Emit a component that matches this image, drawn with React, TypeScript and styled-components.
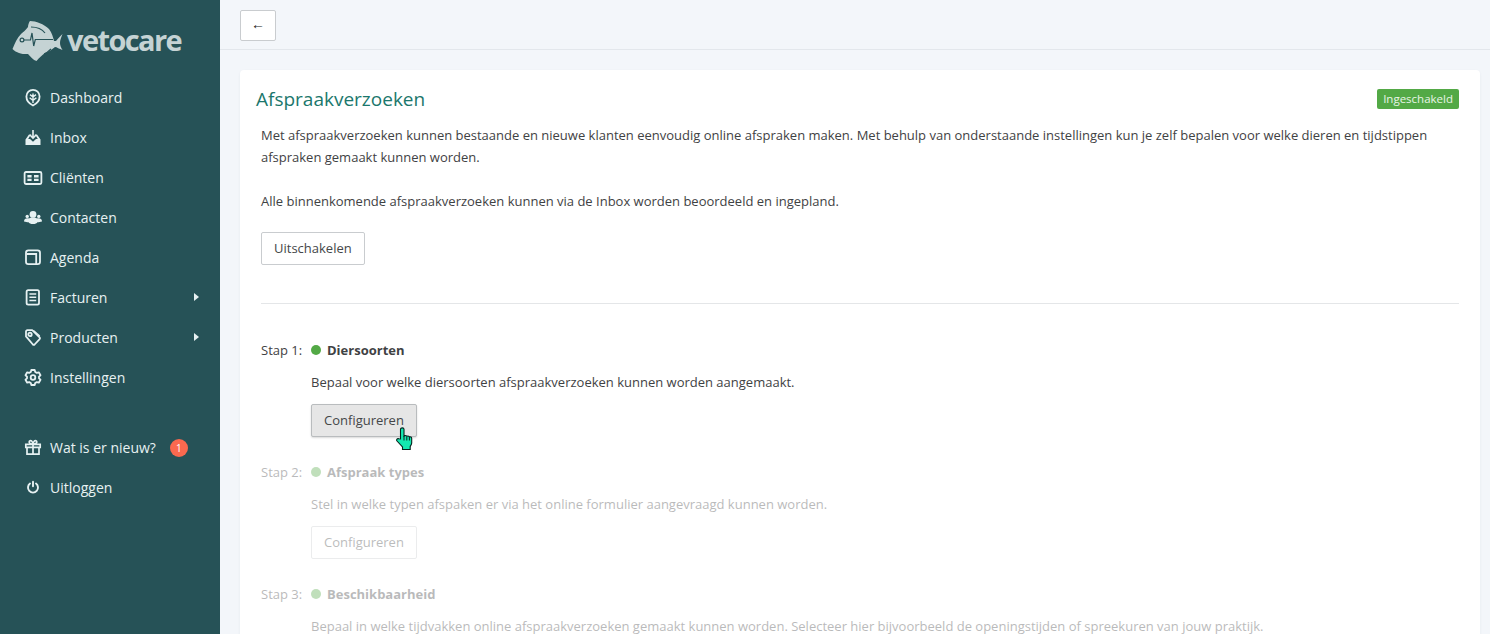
import React from 'react';
import styled, { createGlobalStyle } from 'styled-components';

const GlobalStyle = createGlobalStyle`
  html, body {
    margin: 0;
    padding: 0;
    height: 100%;
    overflow: hidden;
    font-family: "Open Sans", "Liberation Sans", sans-serif;
  }
  * {
    box-sizing: border-box;
  }
`;

const iconProps = {
  width: 20,
  height: 20,
  viewBox: '0 0 20 20',
  fill: 'none',
  stroke: 'currentColor',
  strokeWidth: 1.8,
};

const LeafIcon = () => (
  <svg {...iconProps}>
    <path d="M10 18.5C5.8 16.5 3.4 13.5 3.4 9.5 3.4 5.5 6.5 2.8 10 2.8s6.6 2.7 6.6 6.7c0 4-2.4 7-6.6 9z" />
    <path d="M10 16V6.5M10 10 7 7.6M10 10l3-2.4M10 13.4 6.6 10.8M10 13.4l3.4-2.6" strokeWidth={1.4} />
  </svg>
);

const InboxIcon = () => (
  <svg {...iconProps} stroke="none" fill="currentColor">
    <path d="M2.5 18v-5.5L6 7.5h2.2v1.6H7L5.2 12H7l3 2.8 3-2.8h1.8L13 9.1h-1.2V7.5H14l3.5 5V18z" />
    <path d="M9.2 3h1.6v6.2l1.8-1.8 1 1-3.6 3.8-3.6-3.8 1-1 1.8 1.8z" />
  </svg>
);

const CardIcon = () => (
  <svg {...iconProps}>
    <rect x="1.6" y="5" width="16.8" height="12" rx="1.4" />
    <path
      d="M4.4 8h4.2v2.4H4.4zM4.4 11.8h4.2v2.2H4.4zM11 8h4.6v2.4H11zM11 11.8h4.6v2.2H11z"
      fill="currentColor"
      stroke="none"
    />
  </svg>
);

const PeopleIcon = () => (
  <svg {...iconProps} stroke="none" fill="currentColor">
    <circle cx="10" cy="7.4" r="3.4" />
    <circle cx="4.2" cy="9.4" r="1.7" />
    <circle cx="15.8" cy="9.4" r="1.7" />
    <path d="M1 14.5c0-2 1.5-3.2 3.5-3.2.6 0 1.1.1 1.5.3 1-.7 2.5-1 4-1s3 .3 4 1c.4-.2.9-.3 1.5-.3 2 0 3.5 1.2 3.5 3.2-1.5.6-3.2.7-4.6.7-.4 1.2-2.2 1.8-4.4 1.8s-4-.6-4.4-1.8c-1.4 0-3.1-.1-4.6-.7z" />
  </svg>
);

const AgendaIcon = () => (
  <svg {...iconProps}>
    <rect x="3" y="3.4" width="14" height="13.8" rx="2.4" />
    <path d="M3.4 7h9.8v10" />
  </svg>
);

const InvoiceIcon = () => (
  <svg {...iconProps}>
    <rect x="3.6" y="3.2" width="12.4" height="14.4" rx="1.6" />
    <path d="M6.4 7h6.8M6.4 10.3h6.8M6.4 13.6h6.8" strokeWidth={1.5} />
  </svg>
);

const TagIcon = () => (
  <svg {...iconProps}>
    <path d="M3 9.4V4.6C3 3.8 3.6 3.2 4.4 3.2h4.8l7.4 7.2c.5.5.5 1.2 0 1.7l-5 5.4c-.5.5-1.2.5-1.7 0z" strokeLinejoin="round" />
    <circle cx="7" cy="7.4" r="1.7" />
    <path d="M10.5 3.5 16.8 9" strokeWidth={1.2} />
  </svg>
);

const GearIcon = () => (
  <svg {...iconProps}>
    <path
      d="M8.3 3h3.4l.5 2 1.6.9 2-.6 1.7 3-1.5 1.4v1.6l1.5 1.4-1.7 3-2-.6-1.6.9-.5 2H8.3l-.5-2-1.6-.9-2 .6-1.7-3 1.5-1.4V9.7L2.5 8.3l1.7-3 2 .6 1.6-.9z"
      strokeLinejoin="round"
    />
    <circle cx="10" cy="10.5" r="2.3" />
  </svg>
);

const GiftIcon = () => (
  <svg {...iconProps} strokeWidth={1.7}>
    <path d="M2.8 7.4h14.4v3H2.8zM4 10.4h12v6.8H4zM10 7.4v9.8" />
    <path d="M10 7.2C8 7.2 6.2 6.6 6.2 5 6.2 3.7 7.6 3.1 8.6 4 9.4 4.8 10 6.2 10 7.2c0-1 .6-2.4 1.4-3.2 1-.9 2.4-.3 2.4 1 0 1.6-1.8 2.2-3.8 2.2z" />
  </svg>
);

const PowerIcon = () => (
  <svg {...iconProps} strokeWidth={1.9} strokeLinecap="round">
    <path d="M7 6.6a5 5 0 1 0 6 0" />
    <path d="M10 4.6v4.6" />
  </svg>
);

const Fish = () => (
  <svg width="59" height="48" viewBox="0 0 59 48">
    <path
      fill="#c5d3d4"
      d="M4.5 33C7 27 9 22 13 18c2-2 5-4 7-7 0-2 1-5 2-6 6 0 14 3 19 8 3 4 4 8 5 12h2c2-2 4-5 6.500-7-1.500 4-2.500 6-2.500 9 0 2 1 5 2.500 7-3.500-1-5.500-3-7.500-3-3 2-6 5-10 6-3 2-6 5-8.500 8-3.500-1-5.500-4-8.500-7-4 0-7 0-9-1-2-1-5-2-6.500-4z"
    />
    <path
      fill="none"
      stroke="#265257"
      strokeWidth="1.2"
      d="M16 24h6.500L24 17l1.700 13 1.600-6.500H45"
    />
    <circle cx="14" cy="24" r="1.900" fill="#c5d3d4" stroke="#265257" strokeWidth="1.200" />
    <path fill="none" stroke="#265257" strokeWidth="1.200" d="M23 11c6 0 11 2 14 6M43 33c-2 2-4 4-7 5" />
  </svg>
);

const Page = styled.div`
  display: flex;
  height: 100vh;
  overflow: hidden;
  background: #f3f6fa;
`;

const Sidebar = styled.aside`
  flex: 0 0 220px;
  background: #265257;
  color: #e6f1f2;
`;

const Logo = styled.div`
  display: flex;
  align-items: center;
  height: 77px;
  padding: 3px 0 0 8px;
`;

const LogoText = styled.span`
  padding-bottom: 2px;
  font-size: 29px;
  font-weight: 700;
  letter-spacing: -1.6px;
  color: #c5d3d4;
`;

const Nav = styled.nav<{ $top?: number }>`
  display: flex;
  flex-direction: column;
  margin-top: ${(p) => p.$top ?? 0}px;
`;

const NavItem = styled.a`
  display: flex;
  align-items: center;
  height: 40px;
  padding: 0 21px 0 23px;
  font-size: 14px;
  color: #e6f1f2;
`;

const NavIcon = styled.span`
  display: flex;
  width: 27px;
  flex: none;
  color: #e6f1f2;
`;

const Caret = styled.span`
  margin-left: auto;
  width: 0;
  height: 0;
  border-left: 5px solid #e6f1f2;
  border-top: 4px solid transparent;
  border-bottom: 4px solid transparent;
`;

const Count = styled.span`
  display: flex;
  align-items: center;
  justify-content: center;
  width: 18px;
  height: 18px;
  margin: 2px 0 0 14px;
  border-radius: 50%;
  background: #f9694f;
  color: #fff;
  font-size: 10px;
`;

const Main = styled.main`
  flex: 1;
  min-width: 0;
`;

const TopBar = styled.header`
  display: flex;
  align-items: center;
  height: 50px;
  padding: 1px 20px 0;
  border-bottom: 1px solid #e3e7ec;
`;

const BackButton = styled.button`
  width: 36px;
  height: 31px;
  padding: 0 0 3px;
  background: #fff;
  border: 1px solid #c9cccf;
  border-radius: 2px;
  font-family: "Liberation Sans", sans-serif;
  font-size: 14px;
  color: #222;
`;

const Card = styled.section`
  margin: 20px 10px 0 20px;
  padding: 15px 21px 40px;
  background: #fff;
  border-radius: 4px;
  box-shadow: 0 1px 3px rgba(30, 50, 70, 0.06);
`;

const CardHead = styled.div`
  display: flex;
  align-items: center;
  justify-content: space-between;
  margin: 0 0 11px -5px;
`;

const Title = styled.h1`
  margin: 0;
  font-size: 19px;
  font-weight: 400;
  line-height: 28px;
  color: #1b776c;
`;

const Status = styled.span`
  padding: 0 6px;
  background: #53a946;
  border-radius: 2px;
  font-size: 11.5px;
  line-height: 20px;
  color: #e9f5e7;
`;

const Text = styled.p`
  margin: 0;
  font-size: 13px;
  line-height: 22px;
  color: #3f4244;
`;

const Intro = styled(Text)`
  margin-bottom: 22px;
`;

const LastIntro = styled(Text)`
  margin-bottom: 20px;
`;

const Button = styled.button<{ $active?: boolean }>`
  display: block;
  height: 33px;
  padding: 0 12px 2px;
  background: ${(p) => (p.$active ? '#e6e6e6' : '#fff')};
  border: 1px solid ${(p) => (p.$active ? '#b9bcbe' : '#c9cccf')};
  border-radius: 2px;
  box-shadow: ${(p) => (p.$active ? '0 1px 2px rgba(0, 0, 0, 0.15)' : 'none')};
  font-family: inherit;
  font-size: 13px;
  color: #444749;
`;

const Rule = styled.hr`
  margin: 38px 0 34px;
  border: 0;
  border-top: 1px solid #e4e6e8;
`;

const Step = styled.div<{ $dim?: boolean }>`
  display: grid;
  grid-template-columns: 50px 1fr;
  margin-bottom: 23px;
  opacity: ${(p) => (p.$dim ? 0.36 : 1)};
`;

const StepNo = styled.span`
  font-size: 13px;
  line-height: 24px;
  color: #3f4244;
`;

const StepName = styled.div`
  display: flex;
  align-items: center;
  gap: 6px;
  height: 24px;
  font-size: 13px;
  font-weight: 700;
  color: #3f4244;
`;

const Dot = styled.span`
  width: 10px;
  height: 10px;
  border-radius: 50%;
  background: #53a946;
`;

const StepBody = styled.div`
  grid-column: 2;
  padding-top: 9px;
`;

const StepText = styled(Text)`
  margin-bottom: 11px;
`;

const ButtonWrap = styled.div`
  position: relative;
  width: max-content;
`;

const Pointer = styled.svg`
  position: absolute;
  left: 85px;
  top: 23px;
`;

const items = [
  { label: 'Dashboard', icon: <LeafIcon /> },
  { label: 'Inbox', icon: <InboxIcon /> },
  { label: 'Cliënten', icon: <CardIcon /> },
  { label: 'Contacten', icon: <PeopleIcon /> },
  { label: 'Agenda', icon: <AgendaIcon /> },
  { label: 'Facturen', icon: <InvoiceIcon />, sub: true },
  { label: 'Producten', icon: <TagIcon />, sub: true },
  { label: 'Instellingen', icon: <GearIcon /> },
];

const steps = [
  {
    no: 'Stap 1:',
    name: 'Diersoorten',
    text: 'Bepaal voor welke diersoorten afspraakverzoeken kunnen worden aangemaakt.',
    action: true,
  },
  {
    no: 'Stap 2:',
    name: 'Afspraak types',
    text: 'Stel in welke typen afspaken er via het online formulier aangevraagd kunnen worden.',
    dim: true,
    action: true,
  },
  {
    no: 'Stap 3:',
    name: 'Beschikbaarheid',
    text: 'Bepaal in welke tijdvakken online afspraakverzoeken gemaakt kunnen worden. Selecteer hier bijvoorbeeld de openingstijden of spreekuren van jouw praktijk.',
    dim: true,
  },
];

const App = () => {
  return (
    <Page>
      <GlobalStyle />
      <Sidebar>
        <Logo>
          <Fish />
          <LogoText>vetocare</LogoText>
        </Logo>
        <Nav>
          {items.map((item) => (
            <NavItem key={item.label}>
              <NavIcon>{item.icon}</NavIcon>
              {item.label}
              {item.sub && <Caret />}
            </NavItem>
          ))}
        </Nav>
        <Nav $top={30}>
          <NavItem>
            <NavIcon>
              <GiftIcon />
            </NavIcon>
            Wat is er nieuw?
            <Count>1</Count>
          </NavItem>
          <NavItem>
            <NavIcon>
              <PowerIcon />
            </NavIcon>
            Uitloggen
          </NavItem>
        </Nav>
      </Sidebar>
      <Main>
        <TopBar>
          <BackButton>←</BackButton>
        </TopBar>
        <Card>
          <CardHead>
            <Title>Afspraakverzoeken</Title>
            <Status>Ingeschakeld</Status>
          </CardHead>
          <Intro>
            Met afspraakverzoeken kunnen bestaande en nieuwe klanten eenvoudig online afspraken maken. Met behulp van
            onderstaande instellingen kun je zelf bepalen voor welke dieren en tijdstippen afspraken gemaakt kunnen
            worden.
          </Intro>
          <LastIntro>Alle binnenkomende afspraakverzoeken kunnen via de Inbox worden beoordeeld en ingepland.</LastIntro>
          <Button>Uitschakelen</Button>
          <Rule />
          {steps.map((step, i) => (
            <Step key={step.no} $dim={step.dim}>
              <StepNo>{step.no}</StepNo>
              <StepName>
                <Dot />
                {step.name}
              </StepName>
              <StepBody>
                <StepText>{step.text}</StepText>
                {step.action && (
                  <ButtonWrap>
                    <Button $active={i === 0}>Configureren</Button>
                    {i === 0 && (
                      <Pointer width="18" height="24" viewBox="0 0 18 24">
                        <path
                          d="M4.500 12V2.200C4.500.400 8 .400 8 2.200V9c1-.6 2.200-.5 2.800.2 1-.4 2-.2 2.500.6 1.200-.3 2.400.3 2.400 1.700v4.500c0 1.500-1 2.500-1.500 3.500v3H6.500v-2.500L1 14c-1-1.200.4-3 1.800-2.200z"
                          fill="#14e8b0"
                          stroke="#08211d"
                          strokeWidth="1.100"
                        />
                        <path d="M8 9v4.500M10.800 9.500v4M13.400 10v3.500" fill="none" stroke="#08211d" strokeWidth="1" />
                      </Pointer>
                    )}
                  </ButtonWrap>
                )}
              </StepBody>
            </Step>
          ))}
        </Card>
      </Main>
    </Page>
  );
};

export default App;
